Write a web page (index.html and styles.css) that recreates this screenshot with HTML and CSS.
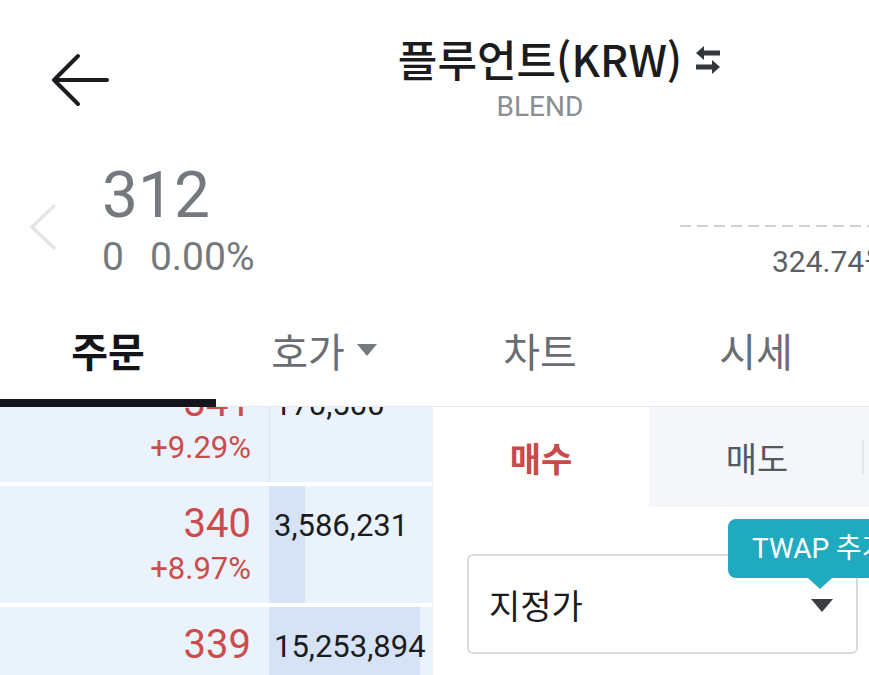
FILE: index.html
```html
<!DOCTYPE html>
<html lang="ko">
<head>
<meta charset="utf-8">
<link rel="stylesheet" href="styles.css">
</head>
<body>
<div class="screen">
  <header class="header">
    <svg class="back" width="60" height="56" viewBox="0 0 60 56"><path d="M57 28H4M28 4L4 28l24 24" fill="none" stroke="#1b1c20" stroke-width="4" stroke-linecap="round" stroke-linejoin="round"/></svg>
    <div class="title-wrap">
      <div class="title">플루언트(KRW)<svg class="swap" width="28" height="32" viewBox="0 0 28 32"><path d="M2 9L10 2V6.5H26V11.5H10V16Z" fill="#33363b"/><path d="M26 23L18 16V20.5H2V25.5H18V30Z" fill="#33363b"/></svg></div>
      <div class="subtitle">BLEND</div>
    </div>
  </header>

  <section class="price">
    <svg class="prev" width="30" height="48" viewBox="0 0 30 48"><path d="M26 3L4 24l22 21" fill="none" stroke="#e3e5e8" stroke-width="3.5" stroke-linecap="round"/></svg>
    <div class="price-main">
      <div class="price-now">312</div>
      <div class="price-change"><span>0</span><span>0.00%</span></div>
    </div>
    <div class="mini">
      <div class="dash"></div>
      <div class="mini-label">324.74원</div>
    </div>
  </section>

  <nav class="tabs">
    <div class="tab active">주문</div>
    <div class="tab">호가<span class="caret"></span></div>
    <div class="tab">차트</div>
    <div class="tab">시세</div>
    <div class="tab">정보</div>
  </nav>

  <main class="body">
    <div class="book">
      <div class="book-scroll">
        <div class="row">
          <div class="cell-price"><div class="p">341</div><div class="pct">+9.29%</div></div>
          <div class="cell-qty"><div class="bar" style="width:0px"></div><span class="q">170,500</span></div>
        </div>
        <div class="row">
          <div class="cell-price"><div class="p">340</div><div class="pct">+8.97%</div></div>
          <div class="cell-qty"><div class="bar" style="width:35px"></div><span class="q">3,586,231</span></div>
        </div>
        <div class="row">
          <div class="cell-price"><div class="p">339</div><div class="pct">+8.65%</div></div>
          <div class="cell-qty"><div class="bar" style="width:150px"></div><span class="q">15,253,894</span></div>
        </div>
      </div>
    </div>

    <div class="order">
      <div class="order-tabs">
        <div class="otab buy">매수</div>
        <div class="otab sell sep">매도</div>
        <div class="otab sell">간편주문</div>
      </div>
      <div class="form">
        <div class="select-wrap">
          <div class="select">
            <span>지정가</span>
            <span class="sel-caret"></span>
          </div>
          <div class="tooltip">TWAP 추가</div>
        </div>
      </div>
    </div>
  </main>
</div>
</body>
</html>
```

FILE: styles.css
```css
* { box-sizing: border-box; }
html, body { margin: 0; padding: 0; background: #fff; overflow: hidden; }
body { width: 869px; height: 675px; }
.screen {
  width: 1080px;
  height: 675px;
  font-family: Roboto, "Noto Sans CJK KR", sans-serif;
  color: #1b1c20;
  display: flex;
  flex-direction: column;
}

/* header */
.header {
  height: 140px;
  position: relative;
  display: flex;
  justify-content: center;
}
.back { position: absolute; left: 50px; top: 52px; }
.title-wrap { padding-top: 28px; text-align: center; }
.title {
  position: relative;
  font-family: "Noto Sans CJK KR", sans-serif;
  font-size: 43px;
  line-height: 60px;
  font-weight: 500;
  color: #1b1c20;
}
.swap { position: absolute; right: -40px; top: 16px; }
.subtitle {
  margin-top: 3px;
  font-size: 28px;
  line-height: 32px;
  color: #8a8d92;
}

/* price */
.price {
  height: 160px;
  display: flex;
  align-items: flex-start;
}
.prev { margin: 63px 0 0 28px; flex: none; }
.price-main { margin: 24px 0 0 44px; color: #75797e; }
.price-now { font-size: 64px; line-height: 64px; }
.price-change {
  margin-top: 7px;
  font-size: 39px;
  line-height: 44px;
  display: flex;
  gap: 26px;
}
.mini { margin-left: auto; width: 400px; padding-top: 85px; }
.dash {
  height: 2px;
  background: repeating-linear-gradient(90deg, #cfd1d4 0 11px, transparent 11px 17px);
}
.mini-label {
  margin: 18px 0 0 92px;
  font-size: 30px;
  line-height: 34px;
  color: #5c6066;
}

/* tabs */
.tabs {
  height: 107px;
  display: flex;
  border-bottom: 1px solid #e6e8eb;
}
.tab {
  width: 216px;
  position: relative;
  display: flex;
  align-items: center;
  justify-content: center;
  padding-bottom: 6px;
  font-family: "Noto Sans CJK KR", sans-serif;
  font-size: 40px;
  color: #6a6d72;
}
.tab.active { color: #141518; font-weight: 700; }
.tab.active::after {
  content: "";
  position: absolute;
  left: 0; right: 0; bottom: -1px;
  height: 8px;
  background: #15161b;
}
.caret {
  margin-left: 12px;
  width: 0; height: 0;
  border-left: 10px solid transparent;
  border-right: 10px solid transparent;
  border-top: 12px solid #76797e;
}

/* body */
.body { flex: 1; display: flex; min-height: 0; }
.book { width: 432px; overflow: hidden; flex: none; }
.book-scroll {
  margin-top: -42px;
  display: flex;
  flex-direction: column;
  gap: 4px;
}
.row { height: 117px; display: flex; background: #eaf2fc; }
.cell-price {
  width: 270px;
  padding: 14px 18px 0 0;
  text-align: right;
  color: #cc4b4b;
  border-right: 1px solid #dde7f3;
}
.p { font-size: 40px; line-height: 48px; }
.pct { font-size: 31px; line-height: 42px; }
.cell-qty { flex: 1; position: relative; padding: 18px 0 0 4px; }
.bar { position: absolute; left: 0; top: 0; bottom: 0; background: #d6e3f7; }
.q { position: relative; font-size: 31px; line-height: 44px; color: #1b1c20; }

/* order panel */
.order { flex: 1; border-left: 1px solid #eef0f3; }
.order-tabs { height: 100px; display: flex; }
.otab {
  width: 216px;
  position: relative;
  display: flex;
  align-items: center;
  justify-content: center;
  font-family: "Noto Sans CJK KR", sans-serif;
  font-size: 34px;
}
.otab.buy { color: #c84a4a; font-weight: 700; background: #fff; }
.otab.sell { color: #55585d; background: #f4f6f9; }
.otab.sep::after {
  content: "";
  position: absolute;
  right: 1px;
  top: 33px;
  width: 2px;
  height: 34px;
  background: #e3e5e8;
}
.form { padding: 47px 0 0 34px; }
.select-wrap { position: relative; width: 391px; }
.select {
  height: 100px;
  border: 2px solid #d9dadc;
  border-radius: 6px;
  display: flex;
  align-items: center;
  justify-content: space-between;
  padding: 0 23px 0 20px;
  font-family: "Noto Sans CJK KR", sans-serif;
  font-size: 34px;
  color: #1b1c20;
}
.sel-caret {
  width: 0; height: 0;
  border-left: 11px solid transparent;
  border-right: 11px solid transparent;
  border-top: 13px solid #3a3d42;
  margin-top: 2px;
}
.tooltip {
  position: absolute;
  left: 261px;
  top: -35px;
  height: 59px;
  padding: 0 24px;
  background: #1faac0;
  border-radius: 8px;
  color: #fff;
  font-family: Roboto, "Noto Sans CJK KR", sans-serif;
  font-size: 28px;
  line-height: 59px;
  white-space: nowrap;
}
.tooltip::after {
  content: "";
  position: absolute;
  left: 80px;
  top: 59px;
  border-left: 12px solid transparent;
  border-right: 12px solid transparent;
  border-top: 11px solid #1faac0;
}
```
